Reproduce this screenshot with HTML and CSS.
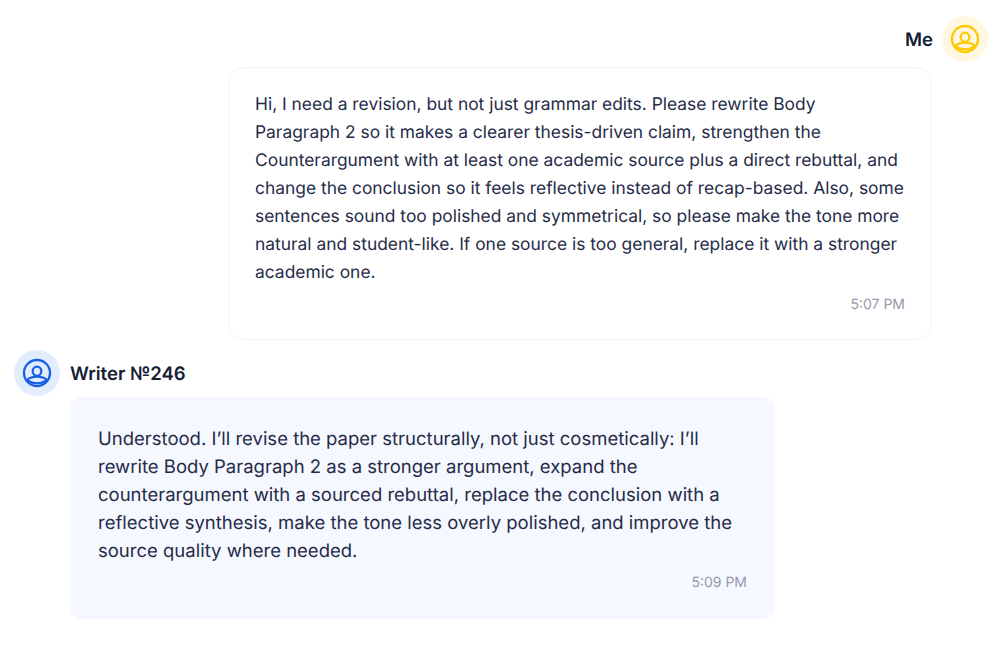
FILE: index.html
```html
<!DOCTYPE html>
<html lang="en">
<head>
<meta charset="UTF-8">
<title>Messages</title>
<link rel="stylesheet" href="styles.css">
</head>
<body>
  <div class="chat">
    <!-- customer message -->
    <div class="message message-me">
      <div class="author author-me">
        <span class="author-name">Me</span>
        <span class="avatar avatar-me">
          <svg viewBox="0 0 30 30" width="30" height="30" fill="none" stroke="currentColor" stroke-width="2.3">
            <circle cx="15" cy="15" r="13"/>
            <ellipse cx="15" cy="13.2" rx="4.3" ry="4.6"/>
            <path d="M5.2 21.8C7.5 19.6 11 18.6 15 18.6s7.5 1 9.8 3.200C22.500 24 19 25.200 15 25.200s-7.500-1.200-9.800-3.400z"/>
          </svg>
        </span>
      </div>
      <div class="bubble bubble-me">
        <p class="bubble-text">Hi, I need a revision, but not just grammar edits. Please rewrite Body Paragraph 2 so it makes a clearer thesis-driven claim, strengthen the Counterargument with at least one academic source plus a direct rebuttal, and change the conclusion so it feels reflective instead of recap-based. Also, some sentences sound too polished and symmetrical, so please make the tone more natural and student-like. If one source is too general, replace it with a stronger academic one.</p>
        <div class="bubble-time">5:07 PM</div>
      </div>
    </div>

    <!-- writer reply -->
    <div class="message message-writer">
      <div class="author author-writer">
        <span class="avatar avatar-writer">
          <svg viewBox="0 0 30 30" width="30" height="30" fill="none" stroke="currentColor" stroke-width="2.3">
            <circle cx="15" cy="15" r="13"/>
            <ellipse cx="15" cy="13.2" rx="4.3" ry="4.6"/>
            <path d="M5.2 21.8C7.5 19.6 11 18.6 15 18.6s7.5 1 9.8 3.200C22.500 24 19 25.200 15 25.200s-7.500-1.200-9.800-3.400z"/>
          </svg>
        </span>
        <span class="author-name">Writer №246</span>
      </div>
      <div class="bubble bubble-writer">
        <p class="bubble-text">Understood. I’ll revise the paper structurally, not just cosmetically: I’ll rewrite Body Paragraph 2 as a stronger argument, expand the counterargument with a sourced rebuttal, replace the conclusion with a reflective synthesis, make the tone less overly polished, and improve the source quality where needed.</p>
        <div class="bubble-time">5:09 PM</div>
      </div>
    </div>
  </div>
</body>
</html>
```

FILE: styles.css
```css
body {
  margin: 0;
  background-color: #fff;
  font-family: 'Inter', 'Liberation Sans', sans-serif;
  color: #252b48;
  text-rendering: geometricPrecision;
}

.chat {
  display: flex;
  flex-direction: column;
  gap: 10px;
  padding: 16px 17px 0 14px;
}

.message {
  display: flex;
  flex-direction: column;
}

.author {
  display: flex;
  align-items: center;
  gap: 9px;
}

.author-me {
  justify-content: flex-end;
}

.author-writer {
  gap: 10px;
}

.author-name {
  padding-top: 2px;
  font-size: 18.5px;
  font-weight: 600;
  line-height: 28px;
  color: #142032;
}

.avatar {
  display: flex;
  justify-content: center;
  align-items: center;
  width: 46px;
  height: 46px;
  border-radius: 50%;
}

.avatar-me {
  background-color: #fff7e0;
  color: #ffc800;
}

.avatar-writer {
  background-color: #e1ecfd;
  color: #1a5fe6;
}

.bubble {
  box-sizing: border-box;
}

.bubble-me {
  align-self: flex-end;
  width: 704px;
  height: 273px;
  margin-top: 5px;
  margin-right: 56px;
  padding: 23px 26px 0;
  border: 1px solid #f1f3f6;
  border-radius: 16px;
  font-size: 17.4px;
}

.bubble-writer {
  width: 705px;
  height: 222px;
  margin-top: 1px;
  margin-left: 56px;
  padding: 28px 28px 0;
  background-color: #f5f8ff;
  border-radius: 12px;
  font-size: 18.5px;
}

.bubble-text {
  margin: 0;
  line-height: 28px;
}

.bubble-time {
  margin-top: 8px;
  text-align: right;
  font-size: 14px;
  line-height: 20px;
  color: #9499a8;
}
```
